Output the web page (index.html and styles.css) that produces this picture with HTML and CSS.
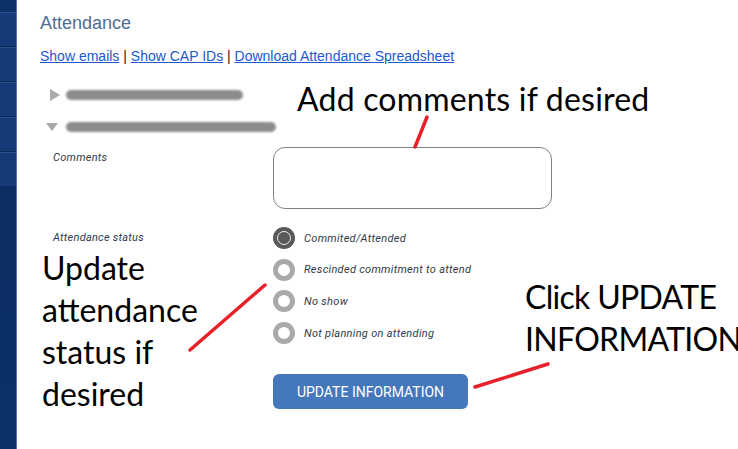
FILE: index.html
```html
<!DOCTYPE html>
<html lang="en">
<head>
<meta charset="utf-8">
<title>Attendance</title>
<link rel="stylesheet" href="styles.css">
</head>
<body>
<div class="page">
  <nav class="sidebar">
    <div class="seg"></div>
    <div class="seg"></div>
    <div class="seg"></div>
    <div class="seg"></div>
    <div class="seg"></div>
  </nav>
  <main class="content">
    <h2 class="title">Attendance</h2>
    <div class="links">
      <a href="#">Show emails</a> | <a href="#">Show CAP IDs</a> | <a href="#">Download Attendance Spreadsheet</a>
    </div>
    <ul class="members">
      <li class="member">
        <span class="tri tri-right"></span>
        <span class="blur blur-short"></span>
      </li>
      <li class="member">
        <span class="tri tri-down"></span>
        <span class="blur blur-long"></span>
      </li>
    </ul>
    <form class="form">
      <div class="field-label comments-label">Comments</div>
      <div class="field-control"><textarea class="comments"></textarea></div>
      <div class="field-label status-label">Attendance status</div>
      <div class="field-control radios">
        <label class="radio"><span class="dot checked"></span><span class="radio-text">Commited/Attended</span></label>
        <label class="radio"><span class="dot"></span><span class="radio-text">Rescinded commitment to attend</span></label>
        <label class="radio"><span class="dot"></span><span class="radio-text">No show</span></label>
        <label class="radio"><span class="dot"></span><span class="radio-text">Not planning on attending</span></label>
      </div>
      <div class="field-label"></div>
      <div class="field-control"><button type="button" class="update-btn">UPDATE INFORMATION</button></div>
    </form>
  </main>

  <div class="note note-comments">Add comments if desired</div>
  <div class="note note-status">Update<br>attendance<br>status if<br>desired</div>
  <div class="note note-click">Click UPDATE<br>INFORMATION</div>
  <svg class="arrows" width="738" height="449" viewBox="0 0 738 449">
    <line x1="415" y1="147" x2="427" y2="117"/>
    <line x1="190" y1="350" x2="265" y2="285"/>
    <line x1="475" y1="387" x2="548" y2="364"/>
  </svg>
</div>
</body>
</html>
```

FILE: styles.css
```css
* { box-sizing: border-box; }
html, body { margin: 0; padding: 0; }
body {
  background: #fff;
  font-family: Arial, "Liberation Sans", sans-serif;
  width: 738px;
  height: 449px;
  overflow: hidden;
}
.page {
  position: relative;
  display: flex;
  width: 738px;
  height: 449px;
  overflow: hidden;
}
.sidebar {
  flex: none;
  width: 17px;
  border-right: 1px solid #5876a8;
  background: linear-gradient(#0c3068, #0a2d62 45%, #0b3166);
  padding-top: 12px;
  display: flex;
  flex-direction: column;
}
.seg {
  height: 35px;
  background: #143a78;
  border-top: 1px solid #2d5089;
  border-bottom: 1px solid #0a2a5c;
}
.content {
  flex: 1;
  padding: 12px 0 0 23px;
}
.title {
  margin: 0;
  font-weight: normal;
  font-size: 18px;
  line-height: 22px;
  color: #4f6d94;
}
.links {
  margin-top: 13px;
  font-size: 14px;
  line-height: 18px;
  color: #222;
}
.links a {
  color: #2157cf;
  text-decoration: underline;
}
.members {
  list-style: none;
  margin: 14px 0 0;
  padding: 0;
}
.member {
  height: 32px;
  display: flex;
  align-items: center;
  padding-left: 6px;
}
.tri {
  width: 20px;
  display: flex;
}
.tri-right::before {
  content: "";
  margin-left: 4px;
  border-left: 10px solid #a9a9a9;
  border-top: 6px solid transparent;
  border-bottom: 6px solid transparent;
}
.tri-down::before {
  content: "";
  border-top: 8px solid #a9a9a9;
  border-left: 6px solid transparent;
  border-right: 6px solid transparent;
}
.blur {
  height: 10px;
  border-radius: 5px;
  background: #8c8c8c;
  filter: blur(0.8px);
}
.blur-short { width: 177px; }
.blur-long { width: 210px; }
.form {
  margin-top: 4px;
  padding-left: 13px;
  display: grid;
  grid-template-columns: 220px 1fr;
  row-gap: 18px;
}
.field-label {
  font-family: Roboto, "Liberation Sans", sans-serif;
  font-style: italic;
  font-size: 11px;
  line-height: 13px;
  color: #2f3a4a;
  letter-spacing: 0.25px;
}
.comments-label { padding-top: 4px; }
.status-label { padding-top: 4px; }
.comments {
  display: block;
  width: 279px;
  height: 62px;
  border: 1px solid #808080;
  border-radius: 12px;
  resize: none;
  background: #fff;
}
.radios {
  display: flex;
  flex-direction: column;
  gap: 9.7px;
}
.radio {
  display: flex;
  align-items: center;
  gap: 9px;
  height: 22px;
}
.dot {
  flex: none;
  width: 22px;
  height: 22px;
  border-radius: 50%;
  border: 5px solid #a9a9a9;
  background: #fff;
}
.dot.checked {
  border: none;
  background: #595959;
  display: flex;
  align-items: center;
  justify-content: center;
}
.dot.checked::after {
  content: "";
  width: 12px;
  height: 12px;
  border-radius: 50%;
  border: 1.5px solid #eee;
}
.radio-text {
  font-family: Roboto, "Liberation Sans", sans-serif;
  font-style: italic;
  font-size: 11px;
  color: #2f3a4a;
  letter-spacing: 0.3px;
}
.update-btn {
  margin-top: 12px;
  width: 195px;
  height: 35px;
  border: none;
  border-radius: 6px;
  background: #4577bb;
  color: #fff;
  font-family: Roboto, "Liberation Sans", sans-serif;
  font-size: 14px;
  padding: 0;
}
.note {
  position: absolute;
  font-family: Lato, "Open Sans", sans-serif;
  font-size: 32px;
  line-height: 42.3px;
  color: #000;
  white-space: nowrap;
}
.note-comments { left: 297px; top: 77.5px; letter-spacing: 0.2px; }
.note-status { left: 42px; top: 246.5px; }
.note-click { left: 525px; top: 275.5px; letter-spacing: -0.7px; }
.arrows {
  position: absolute;
  left: 0;
  top: 0;
}
.arrows line {
  stroke: #e8202a;
  stroke-width: 3.5;
  stroke-linecap: round;
}
```
